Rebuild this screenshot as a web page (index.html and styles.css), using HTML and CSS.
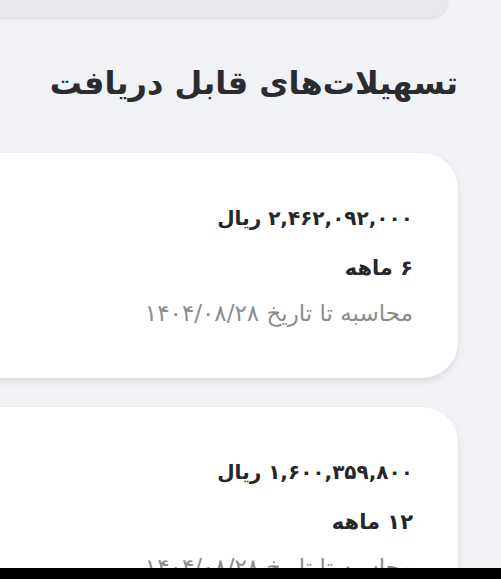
FILE: index.html
```html
<!DOCTYPE html>
<html lang="fa" dir="rtl">

<head>
    <meta charset="UTF-8">
    <meta name="viewport" content="width=device-width, initial-scale=1.0">
    <title>تسهیلات</title>
    <link rel="stylesheet" href="styles.css">
</head>

<body>
    <div class="page">
        <div class="top-card"></div>

        <h2 class="title">تسهیلات‌های قابل دریافت</h2>

        <div class="loan-list">
            <div class="loan-card">
                <p class="amount">۲,۴۶۲,۰۹۲,۰۰۰ ریال</p>
                <p class="term">۶ ماهه</p>
                <p class="date">محاسبه تا تاریخ ۱۴۰۴/۰۸/۲۸</p>
            </div>
            <div class="loan-card">
                <p class="amount">۱,۶۰۰,۳۵۹,۸۰۰ ریال</p>
                <p class="term">۱۲ ماهه</p>
                <p class="date">محاسبه تا تاریخ ۱۴۰۴/۰۸/۲۸</p>
            </div>
        </div>
    </div>
    <div class="nav-bar"></div>
</body>

</html>
```
FILE: styles.css
```css
* {
    box-sizing: border-box;
    margin: 0;
    padding: 0;
    font-family: "DejaVu Sans", "Noto Sans", sans-serif;
}

body {
    background: #f1f2f6;
    overflow: hidden;
    height: 579px;
}

.page {
    padding-right: 43px;
    overflow: hidden;
    height: 579px;
}

.top-card {
    height: 17px;
    margin-left: -40px;
    margin-right: 10px;
    background: #e7e9ef;
    border-bottom-right-radius: 30px;
    border-bottom-left-radius: 30px;
    box-shadow: 0 2px 3px rgba(0, 0, 0, 0.08);
}

.title {
    margin-top: 46px;
    font-size: 32px;
    font-weight: bold;
    color: #2b2b30;
    line-height: 40px;
}

.loan-list {
    display: flex;
    flex-direction: column;
    gap: 29px;
    margin-top: 50px;
}

.loan-card {
    flex-shrink: 0;
    height: 225px;
    margin-left: -60px;
    background: #ffffff;
    border-radius: 36px;
    box-shadow: 0 3px 6px rgba(0, 0, 0, 0.1);
    padding: 0 45px;
    display: flex;
    flex-direction: column;
    justify-content: center;
}

.amount,
.term {
    font-size: 20px;
    font-weight: 600;
    color: #26262b;
    line-height: 30px;
}

.term {
    margin-top: 20px;
    font-size: 21px;
}

.date {
    margin-top: 15px;
    font-size: 23px;
    color: #8c8c90;
    line-height: 30px;
}

.nav-bar {
    position: fixed;
    left: 0;
    right: 0;
    bottom: 0;
    height: 11px;
    background: #000;
}
```
